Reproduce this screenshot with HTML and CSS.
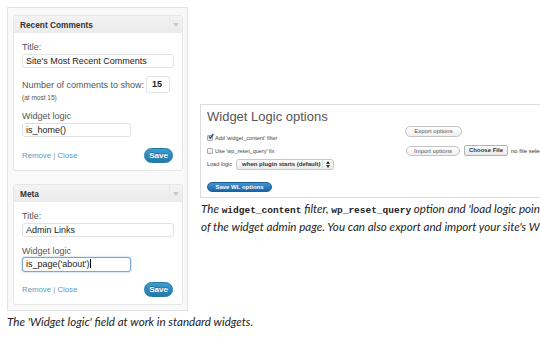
FILE: index.html
```html
<!DOCTYPE html>
<html>
<head>
<meta charset="utf-8">
<link rel="stylesheet" href="styles.css">
</head>
<body>
<div class="page">
  <div class="left">
    <div class="sidebar">
      <div class="widget">
        <div class="w-head">
          <span class="w-title">Recent Comments</span>
          <span class="w-toggle"><svg width="6" height="4" viewBox="0 0 6 4"><path d="M0 0h6L3 4z" fill="#c8c8c8"/></svg></span>
        </div>
        <div class="w-body">
          <div class="lbl first">Title:</div>
          <div class="inp wide">Site's Most Recent Comments</div>
          <div class="num-row"><span class="lbl">Number of comments to show:</span><span class="inp num">15</span></div>
          <div class="small">(at most 15)</div>
          <div class="lbl gap">Widget logic</div>
          <div class="inp mid">is_home()</div>
          <div class="w-foot"><span class="links"><a>Remove</a> | <a>Close</a></span><span class="save">Save</span></div>
        </div>
      </div>
      <div class="widget meta">
        <div class="w-head">
          <span class="w-title">Meta</span>
          <span class="w-toggle"><svg width="6" height="4" viewBox="0 0 6 4"><path d="M0 0h6L3 4z" fill="#c8c8c8"/></svg></span>
        </div>
        <div class="w-body">
          <div class="lbl first">Title:</div>
          <div class="inp wide">Admin Links</div>
          <div class="lbl gap2">Widget logic</div>
          <div class="inp mid focus">is_page('about')<span class="caret"></span></div>
          <div class="w-foot foot2"><span class="links"><a>Remove</a> | <a>Close</a></span><span class="save">Save</span></div>
        </div>
      </div>
    </div>
    <p class="caption">The 'Widget logic' field at work in standard widgets.</p>
  </div>

  <div class="right">
    <div class="wl-box">
      <h2 class="wl-title">Widget Logic options</h2>
      <div class="wl-cols">
        <div class="wl-left">
          <div class="opt"><span class="cb checked"><svg width="7" height="7" viewBox="0 0 7 7"><path d="M1 3.5l1.8 2L6.2 0.6" fill="none" stroke="#1f4f8c" stroke-width="1.6"/></svg></span>Add 'widget_content' filter</div>
          <div class="opt"><span class="cb"></span>Use 'wp_reset_query' fix</div>
          <div class="opt load">Load logic <span class="select">when plugin starts (default)<span class="arrows"><svg width="4" height="7" viewBox="0 0 4 7"><path d="M0 3L2 0L4 3zM0 4L2 7L4 4z" fill="#333"/></svg></span></span></div>
          <span class="wl-save">Save WL options</span>
        </div>
        <div class="wl-right">
          <span class="pill">Export options</span>
          <div class="imp-row"><span class="pill imp">Import options</span><span class="file-btn">Choose File</span><span class="nofile">no file selected</span></div>
        </div>
      </div>
    </div>
    <div class="caption2">
      <div class="cl">The <code>widget_content</code> filter, <code>wp_reset_query</code> option and 'load logic point' options are at the foot</div>
      <div class="cl">of the widget admin page. You can also export and import your site's WL options.</div>
    </div>
  </div>
</div>
</body>
</html>
```
FILE: styles.css
```css
html, body {
  margin: 0;
  padding: 0;
}
body {
  width: 540px;
  height: 342px;
  overflow: hidden;
  background: #fff;
  font-family: "Liberation Sans", Arial, sans-serif;
  color: #333;
}
.page {
  display: flex;
  align-items: flex-start;
  width: 900px;
}
.left {
  flex-shrink: 0;
  width: 181px;
  margin: 7px 0 0 7px;
}
.sidebar {
  box-sizing: border-box;
  width: 181px;
  height: 304px;
  border: 1px solid #e3e3e3;
  background: #f9f9f9;
  padding: 7px 4px 4px 5px;
}
.widget {
  width: 170px;
  box-sizing: border-box;
  border: 1px solid #e6e6e6;
  border-radius: 3px;
  background: #fff;
}
.widget.meta {
  margin-top: 13px;
}
.w-head {
  display: flex;
  align-items: center;
  justify-content: space-between;
  height: 17px;
  background: linear-gradient(#f3f3f3, #ebebeb);
  border-radius: 3px 3px 0 0;
}
.w-title {
  padding-left: 6px;
  font-size: 8.3px;
  font-weight: bold;
  color: #333;
}
.w-toggle {
  display: flex;
  align-items: center;
  justify-content: center;
  width: 12px;
  height: 17px;
  border-left: 1px solid #e8e8e8;
}
.w-body {
  padding: 8px 8px 7px 8px;
}
.lbl {
  display: block;
  font-size: 9px;
  line-height: 12px;
  color: #555;
}
.lbl.gap {
  margin-top: 7px;
}
.lbl.gap2 {
  margin-top: 8px;
}
.inp {
  box-sizing: border-box;
  height: 14px;
  margin-top: 1px;
  padding-left: 3px;
  border: 1px solid #e2e2e2;
  border-radius: 3px;
  background: #fff;
  font-size: 9px;
  line-height: 12px;
  color: #222;
  white-space: nowrap;
}
.inp.wide {
  width: 152px;
}
.inp.mid {
  width: 109px;
}
.num-row {
  display: flex;
  align-items: center;
  margin-top: 8px;
}
.num-row .lbl {
  flex: 1;
}
.inp.num {
  display: block;
  width: 24px;
  height: 17px;
  margin: 0 4px 0 0;
  padding-left: 5px;
  line-height: 15px;
  font-weight: bold;
}
.small {
  font-size: 6.5px;
  line-height: 10px;
  color: #555;
}
.inp.focus {
  height: 15px;
  margin-top: 0;
  border-color: #7aa6d8;
  box-shadow: 0 0 2px rgba(70, 130, 210, 0.6);
  line-height: 13px;
}
.caret {
  display: inline-block;
  width: 1px;
  height: 9px;
  margin-left: 1px;
  vertical-align: -1px;
  background: #000;
}
.w-foot {
  display: flex;
  align-items: center;
  justify-content: space-between;
  margin-top: 11px;
  padding-right: 1px;
}
.w-foot.foot2 {
  margin-top: 10px;
}
.links {
  font-size: 7.8px;
  color: #999;
}
.links a {
  color: #5b9bbd;
}
.save {
  display: inline-block;
  width: 29px;
  height: 15px;
  box-sizing: border-box;
  border-radius: 8px;
  background: linear-gradient(#3c9dd0, #2279aa);
  border: 1px solid #2378a6;
  color: #fff;
  font-size: 8px;
  font-weight: bold;
  line-height: 13px;
  text-align: center;
  text-shadow: 0 -1px 0 rgba(0, 0, 0, 0.3);
}
.caption {
  margin: 4px 0 0 0;
  font-family: Lato, "Open Sans", sans-serif;
  font-style: italic;
  font-size: 11.6px;
  line-height: 14px;
  color: #222;
  white-space: nowrap;
}

/* right side */
.right {
  flex-shrink: 0;
  margin: 104px 0 0 12px;
  width: 420px;
}
.wl-box {
  box-sizing: border-box;
  height: 94px;
  border: 1px solid #dcdcdc;
  border-right: none;
  padding: 4px 0 0 6px;
}
.wl-title {
  margin: 0;
  font-size: 13px;
  line-height: 16px;
  font-weight: normal;
  color: #555;
}
.wl-cols {
  display: flex;
}
.wl-left {
  width: 198px;
  padding-top: 6px;
  font-size: 5.5px;
  color: #444;
}
.opt {
  display: flex;
  align-items: center;
  height: 13px;
  white-space: nowrap;
}
.opt.load {
  height: 14px;
}
.cb {
  box-sizing: border-box;
  display: inline-flex;
  align-items: center;
  justify-content: center;
  width: 6px;
  height: 6px;
  margin-right: 2px;
  border: 1px solid #aaa;
  border-radius: 1px;
  background: linear-gradient(#fff, #e6e6e6);
}
.cb.checked svg {
  margin: -2px -2px 0 0;
}
.select {
  display: inline-flex;
  align-items: center;
  box-sizing: border-box;
  height: 11px;
  width: 98px;
  margin-left: 4px;
  padding-left: 5px;
  border: 1px solid #c8c8c8;
  border-radius: 3px;
  background: linear-gradient(#fafafa, #ececec);
  font-size: 6px;
  font-weight: bold;
  color: #333;
}
.arrows {
  display: flex;
  margin-left: auto;
  padding: 0 3px;
  height: 9px;
  align-items: center;
  border-left: 1px solid #ddd;
}
.wl-save {
  display: inline-block;
  margin-top: 11px;
  width: 65px;
  height: 10px;
  box-sizing: border-box;
  border-radius: 5px;
  background: linear-gradient(#3f93d0, #1d67a8);
  border: 1px solid #1c5f99;
  color: #fff;
  font-size: 6px;
  font-weight: bold;
  line-height: 8px;
  text-align: center;
}
.wl-right {
  padding-top: 1px;
  font-size: 6px;
  color: #555;
}
.pill {
  display: inline-block;
  box-sizing: border-box;
  width: 57px;
  height: 11px;
  border: 1px solid #c4c4c4;
  border-radius: 6px;
  background: linear-gradient(#fff, #f0f0f0);
  line-height: 9px;
  text-align: center;
  color: #555;
}
.imp-row {
  display: flex;
  align-items: center;
  margin-top: 8px;
  margin-left: 1px;
  white-space: nowrap;
}
.pill.imp {
  width: 54px;
  height: 10px;
  line-height: 8px;
}
.file-btn {
  display: inline-block;
  box-sizing: border-box;
  width: 44px;
  height: 11px;
  margin-left: 4px;
  border: 1px solid #b4b4b4;
  border-radius: 2px;
  background: linear-gradient(#fcfcfc, #e8e8e8);
  line-height: 9px;
  text-align: center;
  font-weight: bold;
  color: #333;
}
.nofile {
  margin-left: 3px;
  color: #333;
}
.caption2 {
  margin-top: 3px;
  padding-left: 1px;
  font-family: Lato, "Open Sans", sans-serif;
  font-style: italic;
  font-size: 11.6px;
  line-height: 16px;
  color: #222;
}
.cl {
  white-space: nowrap;
}
.caption2 code {
  font-family: "Liberation Mono", "Courier New", monospace;
  font-style: normal;
  font-weight: bold;
  font-size: 9.5px;
  color: #222;
}
```
